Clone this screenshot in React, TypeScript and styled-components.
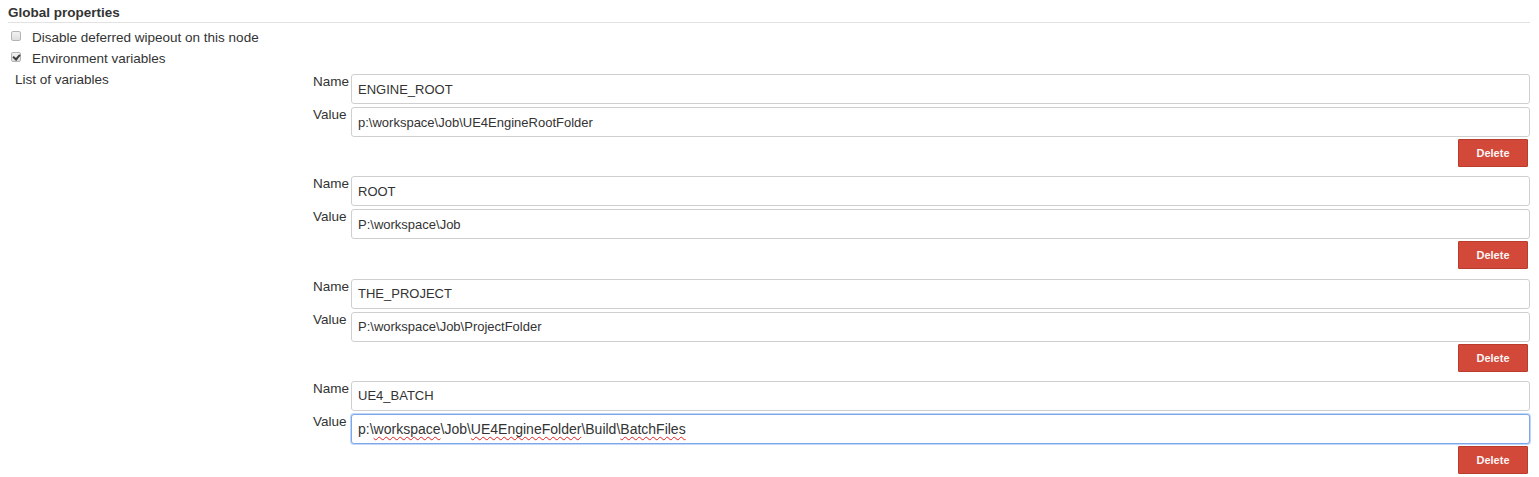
import styled, { createGlobalStyle, css } from "styled-components";

const GlobalStyle = createGlobalStyle`
  body {
    margin: 0;
    background: #fff;
    font-family: "Liberation Sans", Arial, sans-serif;
    font-size: 13.5px;
    color: #333;
  }
`;

type Part = { text: string; misspelled?: boolean };

type Variable = {
  name: string;
  value: string;
  parts?: Part[];
};

const variables: Variable[] = [
  { name: "ENGINE_ROOT", value: "p:\\workspace\\Job\\UE4EngineRootFolder" },
  { name: "ROOT", value: "P:\\workspace\\Job" },
  { name: "THE_PROJECT", value: "P:\\workspace\\Job\\ProjectFolder" },
  {
    name: "UE4_BATCH",
    value: "p:\\workspace\\Job\\UE4EngineFolder\\Build\\BatchFiles",
    parts: [
      { text: "p:\\" },
      { text: "workspace", misspelled: true },
      { text: "\\Job\\" },
      { text: "UE4EngineFolder", misspelled: true },
      { text: "\\Build\\" },
      { text: "BatchFiles", misspelled: true },
    ],
  },
];

const App = () => {
  return (
    <Page>
      <GlobalStyle />
      <SectionHeader>Global properties</SectionHeader>
      <Options>
        <OptionRow>
          <Checkbox />
          <span>Disable deferred wipeout on this node</span>
        </OptionRow>
        <OptionRow>
          <Checkbox $checked />
          <span>Environment variables</span>
        </OptionRow>
      </Options>
      <VariablesRow>
        <SettingLabel>List of variables</SettingLabel>
        <Repeated>
          {variables.map((v) => (
            <Chunk key={v.name}>
              <FieldRow>
                <FieldLabel>Name</FieldLabel>
                <TextInput defaultValue={v.name} />
              </FieldRow>
              <FieldRow>
                <FieldLabel>Value</FieldLabel>
                {v.parts ? (
                  <EditingInput>
                    {v.parts.map((p, i) =>
                      p.misspelled ? (
                        <Misspelled key={i}>{p.text}</Misspelled>
                      ) : (
                        <span key={i}>{p.text}</span>
                      )
                    )}
                  </EditingInput>
                ) : (
                  <TextInput defaultValue={v.value} />
                )}
              </FieldRow>
              <ButtonRow>
                <DeleteButton type="button">Delete</DeleteButton>
              </ButtonRow>
            </Chunk>
          ))}
        </Repeated>
      </VariablesRow>
    </Page>
  );
};

const Page = styled.div`
  padding: 0 9px 0 8px;
`;

const SectionHeader = styled.div`
  padding-top: 4px;
  line-height: 18px;
  font-weight: bold;
  color: #333;
  border-bottom: 1px solid #e2e2e2;
`;

const Options = styled.div`
  padding-top: 4px;
`;

const OptionRow = styled.div`
  display: flex;
  align-items: flex-start;
  line-height: 21px;
  padding-left: 3px;
`;

const Checkbox = styled.span<{ $checked?: boolean }>`
  position: relative;
  flex: none;
  box-sizing: border-box;
  width: 10px;
  height: 10px;
  margin-top: 4px;
  margin-right: 11px;
  border: 1px solid #b4b4b4;
  border-radius: 2px;
  background: linear-gradient(#f2f2f2, #dedede);
  ${(p) =>
    p.$checked &&
    css`
      &::after {
        content: "";
        position: absolute;
        left: 2px;
        top: 0px;
        width: 3px;
        height: 5px;
        border-right: 2px solid #3d3d3d;
        border-bottom: 2px solid #3d3d3d;
        transform: rotate(40deg);
      }
    `}
`;

const VariablesRow = styled.div`
  display: grid;
  grid-template-columns: 305px 1fr;
  margin-top: 3px;
`;

const SettingLabel = styled.div`
  padding-left: 7px;
  line-height: 15px;
`;

const Repeated = styled.div`
  padding-top: 2px;
`;

const Chunk = styled.div`
  margin-bottom: 9.33px;
`;

const FieldRow = styled.div`
  display: grid;
  grid-template-columns: 38px 1fr;
  margin-bottom: 3px;
`;

const FieldLabel = styled.div`
  line-height: 15px;
  color: #333;
`;

const inputLook = css`
  box-sizing: border-box;
  width: 100%;
  height: 30px;
  padding: 0 6px;
  border: 1px solid #cfcfcf;
  border-radius: 3px;
  background: #fff;
  font-family: "Liberation Sans", Arial, sans-serif;
  font-size: 13px;
  color: #333;
  outline: none;
`;

const TextInput = styled.input`
  ${inputLook}
`;

const EditingInput = styled.div`
  ${inputLook}
  display: flex;
  align-items: center;
  white-space: pre;
  font-size: 14px;
  border-color: #7ea7ea;
  box-shadow: 0 0 0 1px rgba(140, 180, 245, 0.55);
`;

const Misspelled = styled.span`
  text-decoration: underline wavy #e02020;
  text-decoration-thickness: 1px;
  text-underline-offset: 2px;
  text-decoration-skip-ink: none;
`;

const ButtonRow = styled.div`
  display: flex;
  justify-content: flex-end;
  padding-right: 2px;
  margin-top: -1px;
`;

const DeleteButton = styled.button`
  box-sizing: border-box;
  width: 70px;
  height: 28px;
  padding: 0;
  border: 1px solid #b93c2d;
  border-radius: 1px;
  background: #d24939;
  color: #fbf4f4;
  font-family: "Liberation Sans", Arial, sans-serif;
  font-size: 11px;
  font-weight: bold;
  cursor: pointer;
`;

export default App;
